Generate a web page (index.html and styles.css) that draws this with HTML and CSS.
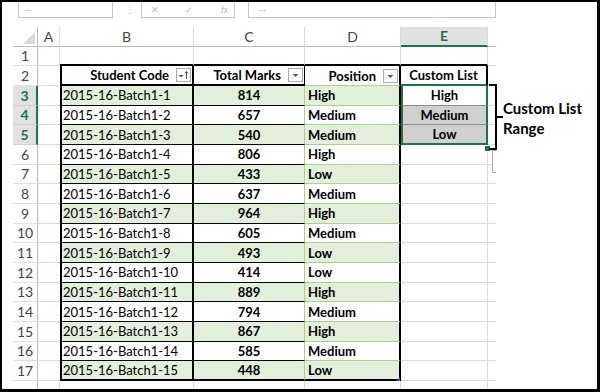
FILE: index.html
```html
<!DOCTYPE html>
<html>
  <head>
    <meta name="viewport" content="width=device-width, initial-scale=1.0">
    <title>Custom List Range</title>
    <link rel="stylesheet" href="styles.css">
  </head>
  <body>

    <div class="frame">

      <div class="sheet">

        <!-- formula bar, cut off at the top -->
        <div class="bar">
          <div class="namebox"><span class="ghost">&#8212;</span></div>
          <div class="dots">&#8942;</div>
          <div class="fxbox"><span class="ghost">&#10005;</span><span class="ghost">&#10003;</span><span class="ghost fx">fx</span></div>
          <div class="formula"><span class="ghost">&#183;&#183;&#183;</span></div>
        </div>

        <div class="row hdr">
          <div class="blank"></div>
          <div class="corner"><svg width="12" height="12" viewBox="0 0 12 12"><path d="M12 0V12H0z" fill="#d9d9d9"/></svg></div>
          <div class="ch">A</div>
          <div class="ch">B</div>
          <div class="ch">C</div>
          <div class="ch">D</div>
          <div class="ch on">E</div>
          <div class="ch f"></div>
        </div>

        <div class="row">
          <div class="blank"></div><div class="rh">1</div><div class="cell"></div>
          <div class="cell top"></div><div class="cell top"></div><div class="cell top"></div><div class="cell top"></div>
          <div class="cell f"></div>
        </div>

        <div class="row">
          <div class="blank"></div><div class="rh">2</div><div class="cell a"></div>
          <div class="cell b th">Student Code<span class="flt"><svg width="13" height="12" viewBox="0 0 13 12"><path d="M1.5 6h5l-2.5 2.5z" fill="#595959"/><path d="M9.5 10V2.5M7.8 4.3 9.5 2.5l1.7 1.8" stroke="#595959" fill="none"/></svg></span></div>
          <div class="cell c th">Total Marks<span class="flt"><svg width="13" height="12" viewBox="0 0 13 12"><path d="M3.5 5h6l-3 3z" fill="#595959"/></svg></span></div>
          <div class="cell d th">Position<span class="flt"><svg width="13" height="12" viewBox="0 0 13 12"><path d="M3.5 5h6l-3 3z" fill="#595959"/></svg></span></div>
          <div class="cell eh">Custom List</div>
          <div class="cell f"></div>
        </div>

        <div class="row alt">
          <div class="blank"></div><div class="rh on">3</div><div class="cell a"></div>
          <div class="cell b">2015-16-Batch1-1</div><div class="cell c">814</div><div class="cell d">High</div>
          <div class="cell es">High</div><div class="cell f"></div>
        </div>
        <div class="row">
          <div class="blank"></div><div class="rh on">4</div><div class="cell a"></div>
          <div class="cell b">2015-16-Batch1-2</div><div class="cell c">657</div><div class="cell d">Medium</div>
          <div class="cell es gray">Medium</div><div class="cell f"></div>
        </div>
        <div class="row alt">
          <div class="blank"></div><div class="rh on">5</div><div class="cell a"></div>
          <div class="cell b">2015-16-Batch1-3</div><div class="cell c">540</div><div class="cell d">Medium</div>
          <div class="cell es gray last">Low</div><div class="cell f"></div>
        </div>
        <div class="row">
          <div class="blank"></div><div class="rh">6</div><div class="cell a"></div>
          <div class="cell b">2015-16-Batch1-4</div><div class="cell c">806</div><div class="cell d">High</div>
          <div class="cell"></div><div class="cell f"></div>
        </div>
        <div class="row alt">
          <div class="blank"></div><div class="rh">7</div><div class="cell a"></div>
          <div class="cell b">2015-16-Batch1-5</div><div class="cell c">433</div><div class="cell d">Low</div>
          <div class="cell"></div><div class="cell f"></div>
        </div>
        <div class="row">
          <div class="blank"></div><div class="rh">8</div><div class="cell a"></div>
          <div class="cell b">2015-16-Batch1-6</div><div class="cell c">637</div><div class="cell d">Medium</div>
          <div class="cell"></div><div class="cell f"></div>
        </div>
        <div class="row alt">
          <div class="blank"></div><div class="rh">9</div><div class="cell a"></div>
          <div class="cell b">2015-16-Batch1-7</div><div class="cell c">964</div><div class="cell d">High</div>
          <div class="cell"></div><div class="cell f"></div>
        </div>
        <div class="row">
          <div class="blank"></div><div class="rh">10</div><div class="cell a"></div>
          <div class="cell b">2015-16-Batch1-8</div><div class="cell c">605</div><div class="cell d">Medium</div>
          <div class="cell"></div><div class="cell f"></div>
        </div>
        <div class="row alt">
          <div class="blank"></div><div class="rh">11</div><div class="cell a"></div>
          <div class="cell b">2015-16-Batch1-9</div><div class="cell c">493</div><div class="cell d">Low</div>
          <div class="cell"></div><div class="cell f"></div>
        </div>
        <div class="row">
          <div class="blank"></div><div class="rh">12</div><div class="cell a"></div>
          <div class="cell b">2015-16-Batch1-10</div><div class="cell c">414</div><div class="cell d">Low</div>
          <div class="cell"></div><div class="cell f"></div>
        </div>
        <div class="row alt">
          <div class="blank"></div><div class="rh">13</div><div class="cell a"></div>
          <div class="cell b">2015-16-Batch1-11</div><div class="cell c">889</div><div class="cell d">High</div>
          <div class="cell"></div><div class="cell f"></div>
        </div>
        <div class="row">
          <div class="blank"></div><div class="rh">14</div><div class="cell a"></div>
          <div class="cell b">2015-16-Batch1-12</div><div class="cell c">794</div><div class="cell d">Medium</div>
          <div class="cell"></div><div class="cell f"></div>
        </div>
        <div class="row alt">
          <div class="blank"></div><div class="rh">15</div><div class="cell a"></div>
          <div class="cell b">2015-16-Batch1-13</div><div class="cell c">867</div><div class="cell d">High</div>
          <div class="cell"></div><div class="cell f"></div>
        </div>
        <div class="row">
          <div class="blank"></div><div class="rh">16</div><div class="cell a"></div>
          <div class="cell b">2015-16-Batch1-14</div><div class="cell c">585</div><div class="cell d">Medium</div>
          <div class="cell"></div><div class="cell f"></div>
        </div>
        <div class="row alt">
          <div class="blank"></div><div class="rh">17</div><div class="cell a"></div>
          <div class="cell b end">2015-16-Batch1-15</div><div class="cell c end">448</div><div class="cell d end">Low</div>
          <div class="cell"></div><div class="cell f"></div>
        </div>
        <div class="row">
          <div class="blank"></div><div class="rh"></div><div class="cell"></div>
          <div class="cell"></div><div class="cell"></div><div class="cell"></div>
          <div class="cell"></div><div class="cell f"></div>
        </div>

        <!-- overlays on the grid -->
        <div class="handle"></div>
        <div class="resize"></div>
        <div class="quick"></div>

      </div>

      <svg class="bracket" width="24" height="72" viewBox="0 0 24 72">
        <path d="M3 3H10V67H3M10 35H17" stroke="#000" stroke-width="2" fill="none"/>
      </svg>
      <div class="note">Custom List<br>Range</div>

    </div>

  </body>
</html>
```

FILE: styles.css
```css
* {
  font-family: "Lato", "Liberation Sans", sans-serif;
}

body {
  margin: 0px;
  padding: 0px;
}

.frame {
  position: relative;
  width: 600px;
  height: 392px;
  box-sizing: border-box;
  border: 2px solid #000;
  border-right-width: 3px;
  border-bottom-width: 3px;
  background-color: #fff;
  overflow: hidden;
}

.sheet {
  position: relative;
  display: flex;
  flex-direction: column;
  width: 494px;
  height: 100%;
  overflow: hidden;
}

/* formula bar */

.bar {
  display: flex;
  flex: none;
  height: 25px;
  padding-left: 16px;
  align-items: flex-start;
}

.namebox,
.fxbox,
.formula {
  display: flex;
  height: 16px;
  box-sizing: border-box;
  border: 1px solid #c6c6c6;
  border-top: none;
  overflow: hidden;
  align-items: center;
}

.namebox {
  width: 99px;
  padding-left: 6px;
}

.dots {
  width: 29px;
  padding-left: 12px;
  box-sizing: border-box;
  color: #c8c8c8;
  font-size: 10px;
  line-height: 14px;
}

.fxbox {
  width: 98px;
  padding-left: 9px;
  gap: 26px;
}

.formula {
  margin-left: 13px;
  width: 260px;
  padding-left: 10px;
}

.ghost {
  color: #bdbdbd;
  font-size: 9px;
  line-height: 11px;
}

.fx {
  font-style: italic;
  margin-left: 2px;
}

/* grid */

.row {
  display: grid;
  flex: none;
  grid-template-columns: 11px 25px 22px 134px 111px 96px 87px 8px;
  height: 19.67px;
  font-size: 13px;
  color: #000;
}

.row > div {
  display: flex;
  box-sizing: border-box;
  align-items: center;
  white-space: nowrap;
  overflow: hidden;
}

.corner {
  justify-content: flex-end;
  align-items: flex-end !important;
  padding: 0 2px 2px 0;
  border-right: 1px solid #bcbcbc;
  border-bottom: 1px solid #bcbcbc;
}

.ch {
  justify-content: center;
  color: #444;
  font-size: 14px;
  border-right: 1px solid #dadada;
  border-bottom: 1px solid #bcbcbc;
}

.ch.on {
  color: #217346;
  font-weight: 700;
  background-color: #e1e1e1;
  border-bottom: 2px solid #217346;
}

.rh {
  justify-content: center;
  color: #444;
  font-size: 14px;
  border-right: 1px solid #bcbcbc;
  border-bottom: 1px solid #e1e1e1;
}

.rh.on {
  color: #217346;
  font-weight: 700;
  background-color: #e1e1e1;
  border-right: 2px solid #217346;
  border-bottom-color: #d0d0d0;
}

.cell {
  padding: 0 3px;
  border-right: 1px solid #dadada;
  border-bottom: 1px solid #dadada;
}

.f {
  border-right: none !important;
}

.top {
  border-bottom: 2px solid #000;
}

.a {
  border-right: none;
}

.b {
  border-left: 2px solid #000;
  border-right: 2px solid #000;
  border-bottom: 1px solid #000;
  padding-left: 1px;
}

.c {
  justify-content: center;
  font-weight: 700;
  border-right: 1px solid #a9d08e;
  border-bottom: 1px solid #000;
}

.d {
  font-weight: 700;
  border-right: 2px solid #000;
  border-bottom: 1px solid #a9d08e;
}

.th {
  justify-content: flex-end;
  padding-right: 0;
  font-weight: 700;
}

.b.th,
.c.th {
  border-bottom: 2px solid #000;
}

.c.th {
  border-right-color: #000;
}

.end {
  border-bottom: 2px solid #000;
}

.row.alt .b,
.row.alt .c,
.row.alt .d {
  background-color: #e2efda;
}

.flt {
  display: flex;
  width: 15px;
  height: 14px;
  box-sizing: border-box;
  margin-left: 7px;
  margin-right: 1px;
  justify-content: center;
  align-items: center;
  border: 1px solid #ababab;
  background-color: #fff;
}

.eh {
  justify-content: center;
  font-weight: 700;
  border-right: 2px solid #000;
  border-bottom: 2px solid #217346;
}

.es {
  justify-content: center;
  font-weight: 700;
  border-left: 2px solid #217346;
  border-right: 2px solid #217346;
  border-bottom: 1px solid #8c8c8c;
}

.es.gray {
  background-color: #d0d0d0;
}

.es.last {
  border-bottom: 2px solid #217346;
}

/* overlays */

.handle {
  position: absolute;
  left: 482px;
  top: 143px;
  width: 7px;
  height: 7px;
  box-sizing: border-box;
  border: 1px solid #fff;
  background-color: #217346;
}

.resize {
  position: absolute;
  left: 394px;
  top: 375px;
  width: 0;
  height: 0;
  border-left: 4px solid transparent;
  border-bottom: 4px solid #2f5fb3;
}

.quick {
  position: absolute;
  left: 490px;
  top: 148px;
  width: 20px;
  height: 23px;
  box-sizing: border-box;
  border: 1px solid #8fb59a;
  background-color: #fff;
}

/* annotation */

.bracket {
  position: absolute;
  left: 484px;
  top: 80px;
}

.note {
  position: absolute;
  left: 501px;
  top: 96px;
  font-size: 15px;
  font-weight: 700;
  line-height: 20px;
  color: #000;
}
```
